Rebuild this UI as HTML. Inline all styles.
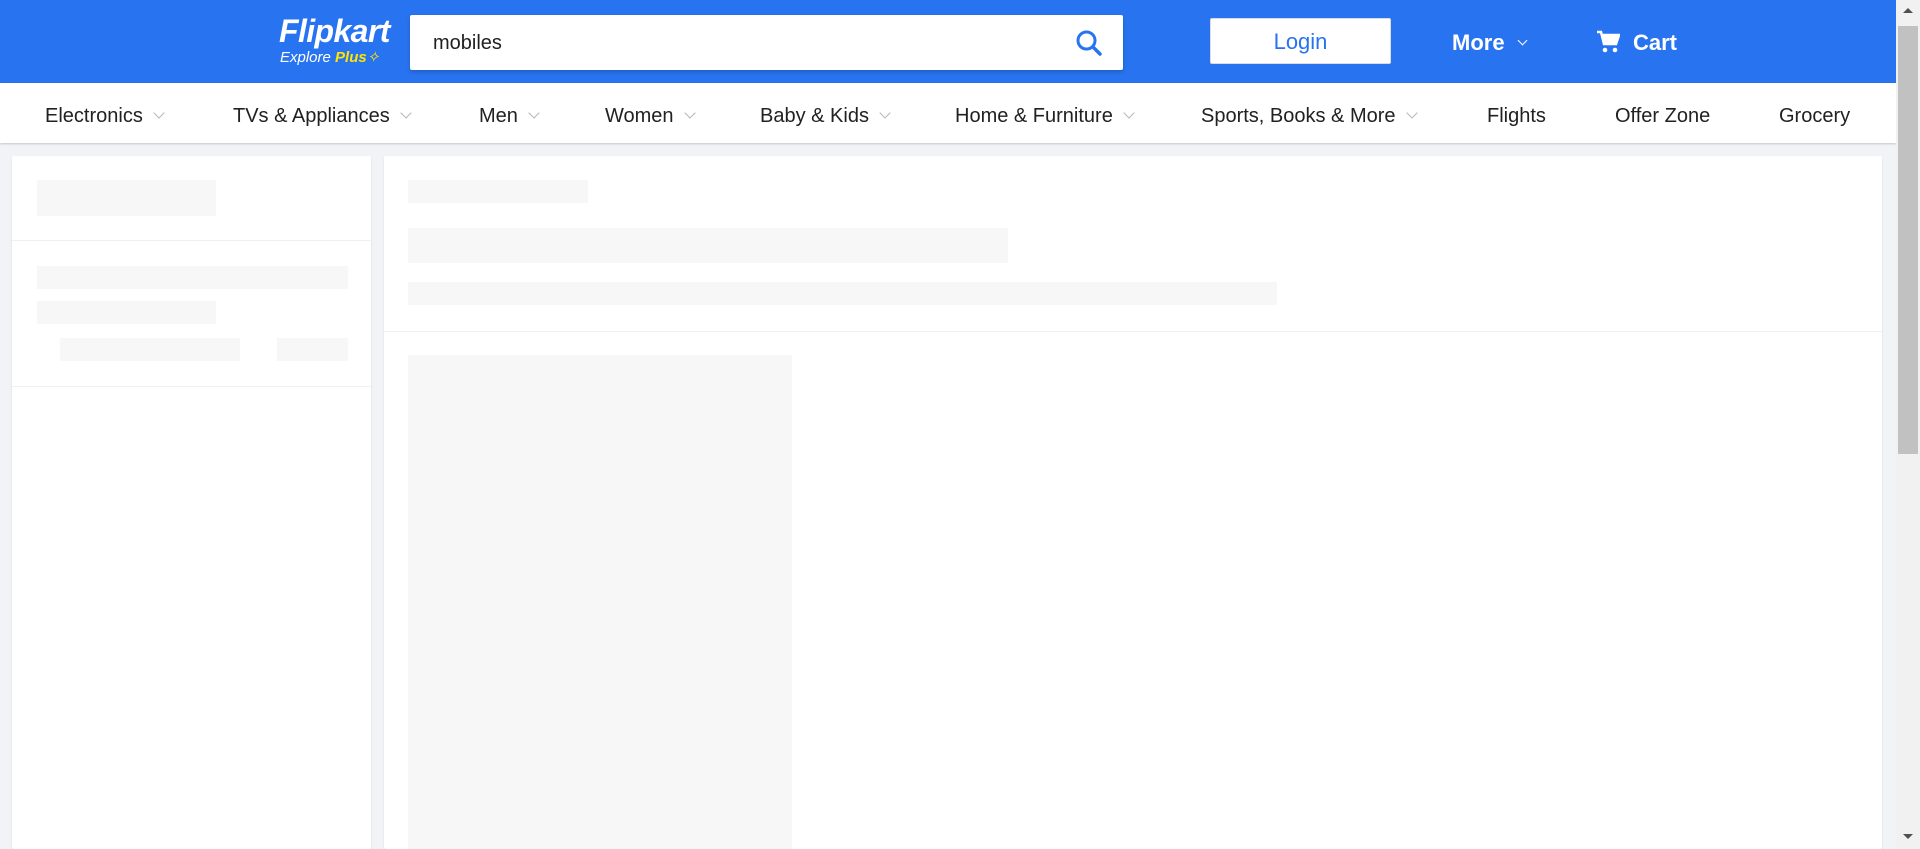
<!DOCTYPE html>
<html style="width:1920px;height:849px;overflow:hidden"><head><meta charset="utf-8"><style>
*{box-sizing:border-box;margin:0;padding:0}
body{width:1920px;height:849px;overflow:hidden;background:#f1f3f6;font-family:"Liberation Sans",Arial,sans-serif;position:relative}
.hdr{position:absolute;left:0;top:0;width:1896px;height:83px;background:#2874f0}
.abs{position:absolute}
.logo{left:279px;top:13px;color:#fff;font-style:italic;font-weight:bold;font-size:32px;letter-spacing:-0.6px}
.sub{left:280px;top:48px;color:#fff;font-style:italic;font-size:15px}
.sub b{color:#ffe500}
.search{left:410px;top:15px;width:713px;height:55px;background:#fff;border-radius:2px;box-shadow:0 2px 4px rgba(0,0,0,.2)}
.search span{position:absolute;left:23px;top:17px;font-size:20px;color:#212121}
.login{left:1210px;top:18px;width:181px;height:46px;background:#fff;border:1px solid #dbdbdb;border-radius:2px;color:#2874f0;font-size:22px;text-align:center;line-height:46px}
.wt{color:#fff;font-weight:bold;font-size:22px;top:30px}
.nav{position:absolute;left:0;top:83px;width:1896px;height:60px;background:#fff;box-shadow:0 1px 2px rgba(0,0,0,.18)}
.nav div{position:absolute;top:22px;font-size:20px;color:#212121}
.chev{display:inline-block;width:8px;height:8px;border-right:1.5px solid #b5b5b5;border-bottom:1.5px solid #b5b5b5;transform:rotate(45deg);margin-left:12px;position:relative;top:-5px}
.card{position:absolute;background:#fff;border-radius:2px;box-shadow:0 1px 2px rgba(0,0,0,.1);overflow:hidden}
.sk{position:absolute;background:#f7f7f7}
.ln{position:absolute;left:0;right:0;height:1px;background:#f0f0f0}
.sb{position:absolute;left:1896px;top:0;width:24px;height:849px;background:#f1f1f1}
.th{position:absolute;left:1898px;top:26px;width:20px;height:428px;background:#c1c1c1}
</style></head><body>
<div class="hdr">
<div class="abs logo">Flipkart</div>
<div class="abs sub">Explore <b>Plus</b><span style="color:#ffe500">✧</span></div>
<div class="abs search"><span>mobiles</span>
<svg style="position:absolute;left:665px;top:14px" width="28" height="28" viewBox="0 0 28 28"><circle cx="11.5" cy="11.5" r="8.5" fill="none" stroke="#2874f0" stroke-width="3"/><line x1="18" y1="18" x2="25" y2="25" stroke="#2874f0" stroke-width="3.5" stroke-linecap="round"/></svg></div>
<div class="abs login">Login</div>
<div class="abs wt" style="left:1452px">More</div>
<div class="abs" style="left:1519px;top:37px;width:7px;height:7px;border-right:1.5px solid #fff;border-bottom:1.5px solid #fff;transform:rotate(45deg)"></div>
<svg class="abs" style="left:1596px;top:30px" width="24" height="24" viewBox="0 0 24 24"><path d="M1 2h4l3 12h12l3-9H7" fill="none" stroke="#fff" stroke-width="2.5"/><path d="M6 5h17l-3 9H8z" fill="#fff"/><circle cx="9" cy="20" r="2.3" fill="#fff"/><circle cx="19" cy="20" r="2.3" fill="#fff"/></svg>
<div class="abs wt" style="left:1633px">Cart</div>
</div>
<div class="nav">
<div style="left:45px">Electronics<span class="chev"></span></div>
<div style="left:233px">TVs &amp; Appliances<span class="chev"></span></div>
<div style="left:479px">Men<span class="chev"></span></div>
<div style="left:605px">Women<span class="chev"></span></div>
<div style="left:760px">Baby &amp; Kids<span class="chev"></span></div>
<div style="left:955px">Home &amp; Furniture<span class="chev"></span></div>
<div style="left:1201px">Sports, Books &amp; More<span class="chev"></span></div>
<div style="left:1487px">Flights</div>
<div style="left:1615px">Offer Zone</div>
<div style="left:1779px">Grocery</div>
</div>
<div class="card" style="left:12px;top:156px;width:359px;height:693px">
<div class="sk" style="left:25px;top:24px;width:179px;height:36px"></div>
<div class="ln" style="top:84px"></div>
<div class="sk" style="left:25px;top:110px;width:311px;height:23px"></div>
<div class="sk" style="left:25px;top:145px;width:179px;height:23px"></div>
<div class="sk" style="left:48px;top:182px;width:180px;height:23px"></div>
<div class="sk" style="left:265px;top:182px;width:71px;height:23px"></div>
<div class="ln" style="top:230px"></div>
</div>
<div class="card" style="left:384px;top:156px;width:1498px;height:693px">
<div class="sk" style="left:24px;top:24px;width:180px;height:23px"></div>
<div class="sk" style="left:24px;top:72px;width:600px;height:35px"></div>
<div class="sk" style="left:24px;top:126px;width:869px;height:23px"></div>
<div class="ln" style="top:175px"></div>
<div class="sk" style="left:24px;top:199px;width:384px;height:510px"></div>
</div>
<div class="sb"></div><div class="th"></div>
<div class="abs" style="left:1903px;top:8px;border:5px solid transparent;border-bottom-color:#505050;border-top:0"></div>
<div class="abs" style="left:1903px;top:834px;border:5px solid transparent;border-top-color:#505050;border-bottom:0"></div>
</body></html>
